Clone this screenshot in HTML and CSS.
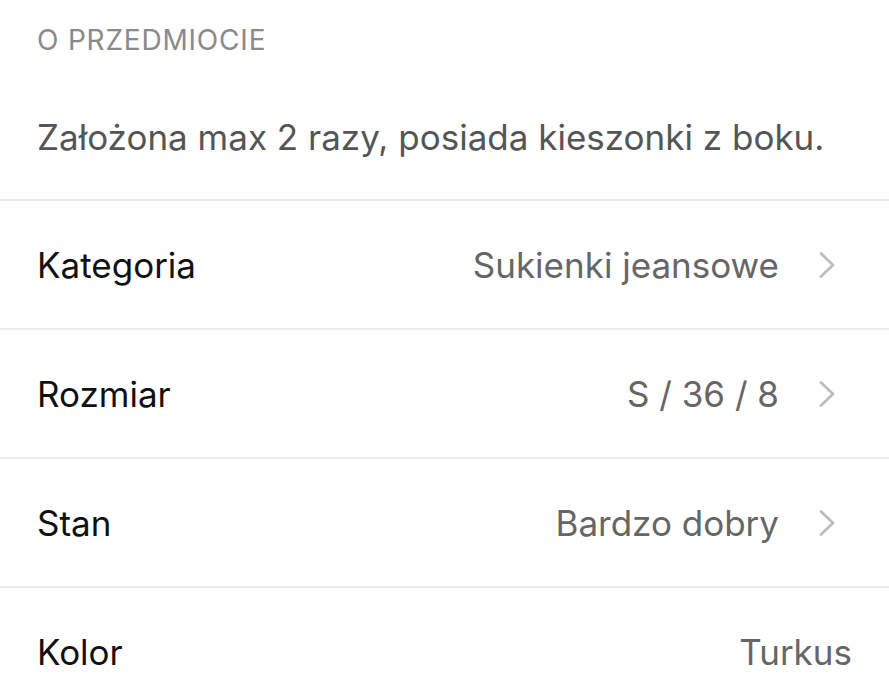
FILE: index.html
```html
<!DOCTYPE html>
<html lang="pl">
<head>
    <meta charset="UTF-8">
    <meta name="viewport" content="width=device-width, initial-scale=1.0">
    <title>O przedmiocie</title>
    <link rel="stylesheet" href="styles.css">
</head>
<body>

    <div class="section-title">O PRZEDMIOCIE</div>

    <div class="description">Założona max 2 razy, posiada kieszonki z boku.</div>

    <div class="details">
        <div class="row">
            <span class="label">Kategoria</span>
            <span class="value">Sukienki jeansowe</span>
            <svg class="chevron" viewBox="0 0 16 26"><path d="M2 1.5l12 11.5-12 11.5"/></svg>
        </div>
        <div class="row">
            <span class="label">Rozmiar</span>
            <span class="value">S / 36 / 8</span>
            <svg class="chevron" viewBox="0 0 16 26"><path d="M2 1.5l12 11.5-12 11.5"/></svg>
        </div>
        <div class="row">
            <span class="label">Stan</span>
            <span class="value">Bardzo dobry</span>
            <svg class="chevron" viewBox="0 0 16 26"><path d="M2 1.5l12 11.5-12 11.5"/></svg>
        </div>
        <div class="row">
            <span class="label">Kolor</span>
            <span class="value">Turkus</span>
        </div>
    </div>

</body>
</html>
```

FILE: styles.css
```css
body {
    margin: 0;
    font-family: Inter, "Noto Sans", sans-serif;
    background-color: #fff;
    color: #111;
}

.section-title {
    padding: 23px 37px 0;
    height: 57px;
    font-size: 28px;
    letter-spacing: 0.8px;
    color: #8a8a8a;
}

.description {
    padding: 36px 37px 0;
    height: 83px;
    font-size: 35px;
    color: #555;
}

.row {
    display: flex;
    align-items: center;
    height: 127px;
    padding: 0 37px;
    border-top: 2px solid #ebebeb;
    font-size: 35px;
}

.label {
    flex: 1;
    color: #111;
}

.value {
    color: #666;
}

.chevron {
    width: 16px;
    height: 26px;
    margin: 0 17px 0 40px;
    fill: none;
    stroke: #bdbdbd;
    stroke-width: 2.8;
    stroke-linecap: round;
    stroke-linejoin: round;
}
```
